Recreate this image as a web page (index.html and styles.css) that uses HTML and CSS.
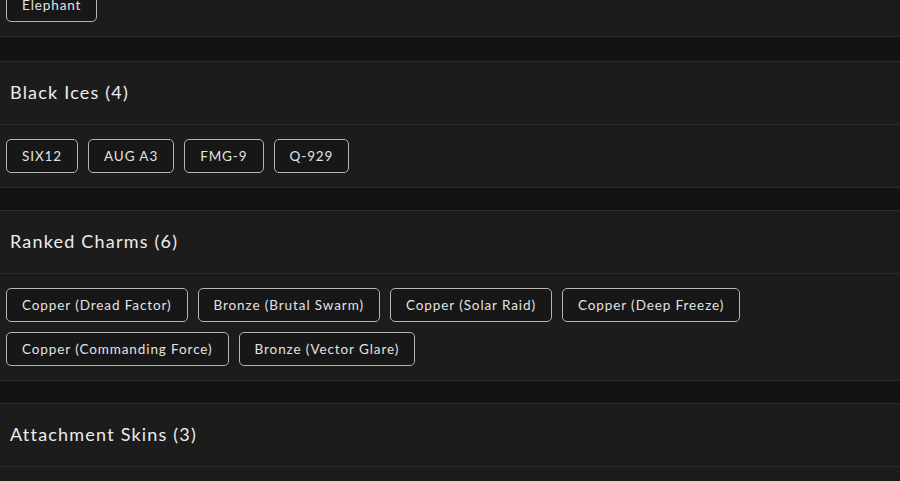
FILE: index.html
```html
<!DOCTYPE html>
<html lang="en">
<head>
<meta charset="utf-8">
<title>Inventory</title>
<link rel="stylesheet" href="styles.css">
</head>
<body>
<main class="list">
  <section class="card card-tail">
    <div class="card-body">
      <span class="chip">Elephant</span>
    </div>
  </section>

  <section class="card">
    <header class="card-head"><h2>Black Ices (4)</h2></header>
    <div class="card-body">
      <span class="chip">SIX12</span>
      <span class="chip">AUG A3</span>
      <span class="chip">FMG-9</span>
      <span class="chip">Q-929</span>
    </div>
  </section>

  <section class="card">
    <header class="card-head"><h2>Ranked Charms (6)</h2></header>
    <div class="card-body">
      <span class="chip">Copper (Dread Factor)</span>
      <span class="chip">Bronze (Brutal Swarm)</span>
      <span class="chip">Copper (Solar Raid)</span>
      <span class="chip">Copper (Deep Freeze)</span>
      <span class="chip">Copper (Commanding Force)</span>
      <span class="chip">Bronze (Vector Glare)</span>
    </div>
  </section>

  <section class="card">
    <header class="card-head"><h2>Attachment Skins (3)</h2></header>
    <div class="card-body">
      <span class="chip">Skin</span>
      <span class="chip">Skin</span>
      <span class="chip">Skin</span>
    </div>
  </section>
</main>
</body>
</html>
```

FILE: styles.css
```css
html, body {
  margin: 0;
  padding: 0;
  background: #131313;
}

body {
  font-family: Lato, "Liberation Sans", sans-serif;
  color: #e6e6e6;
}

.list {
  display: flex;
  flex-direction: column;
  gap: 22px;
}

.card {
  background: #1c1c1c;
  border-top: 1px solid #2c2c2c;
  border-bottom: 1px solid #2c2c2c;
}

.card-tail {
  margin-top: -26px;
  margin-bottom: 2px;
  border-top: none;
}

.card-head {
  height: 60px;
  display: flex;
  align-items: center;
  padding: 0 10px 2px;
  border-bottom: 1px solid #2c2c2c;
}

.card-head h2 {
  margin: 0;
  font-size: 18px;
  font-weight: 400;
  letter-spacing: 1.2px;
  color: #ececec;
}

.card-body {
  display: flex;
  flex-wrap: wrap;
  gap: 10px;
  padding: 14px 6px;
}

.chip {
  box-sizing: border-box;
  height: 34px;
  display: inline-flex;
  align-items: center;
  padding: 0 15px;
  border: 1.5px solid #b4b4b4;
  border-radius: 5px;
  background: #171717;
  font-size: 13.5px;
  letter-spacing: 0.9px;
  color: #e2e2e2;
  white-space: nowrap;
}
```
